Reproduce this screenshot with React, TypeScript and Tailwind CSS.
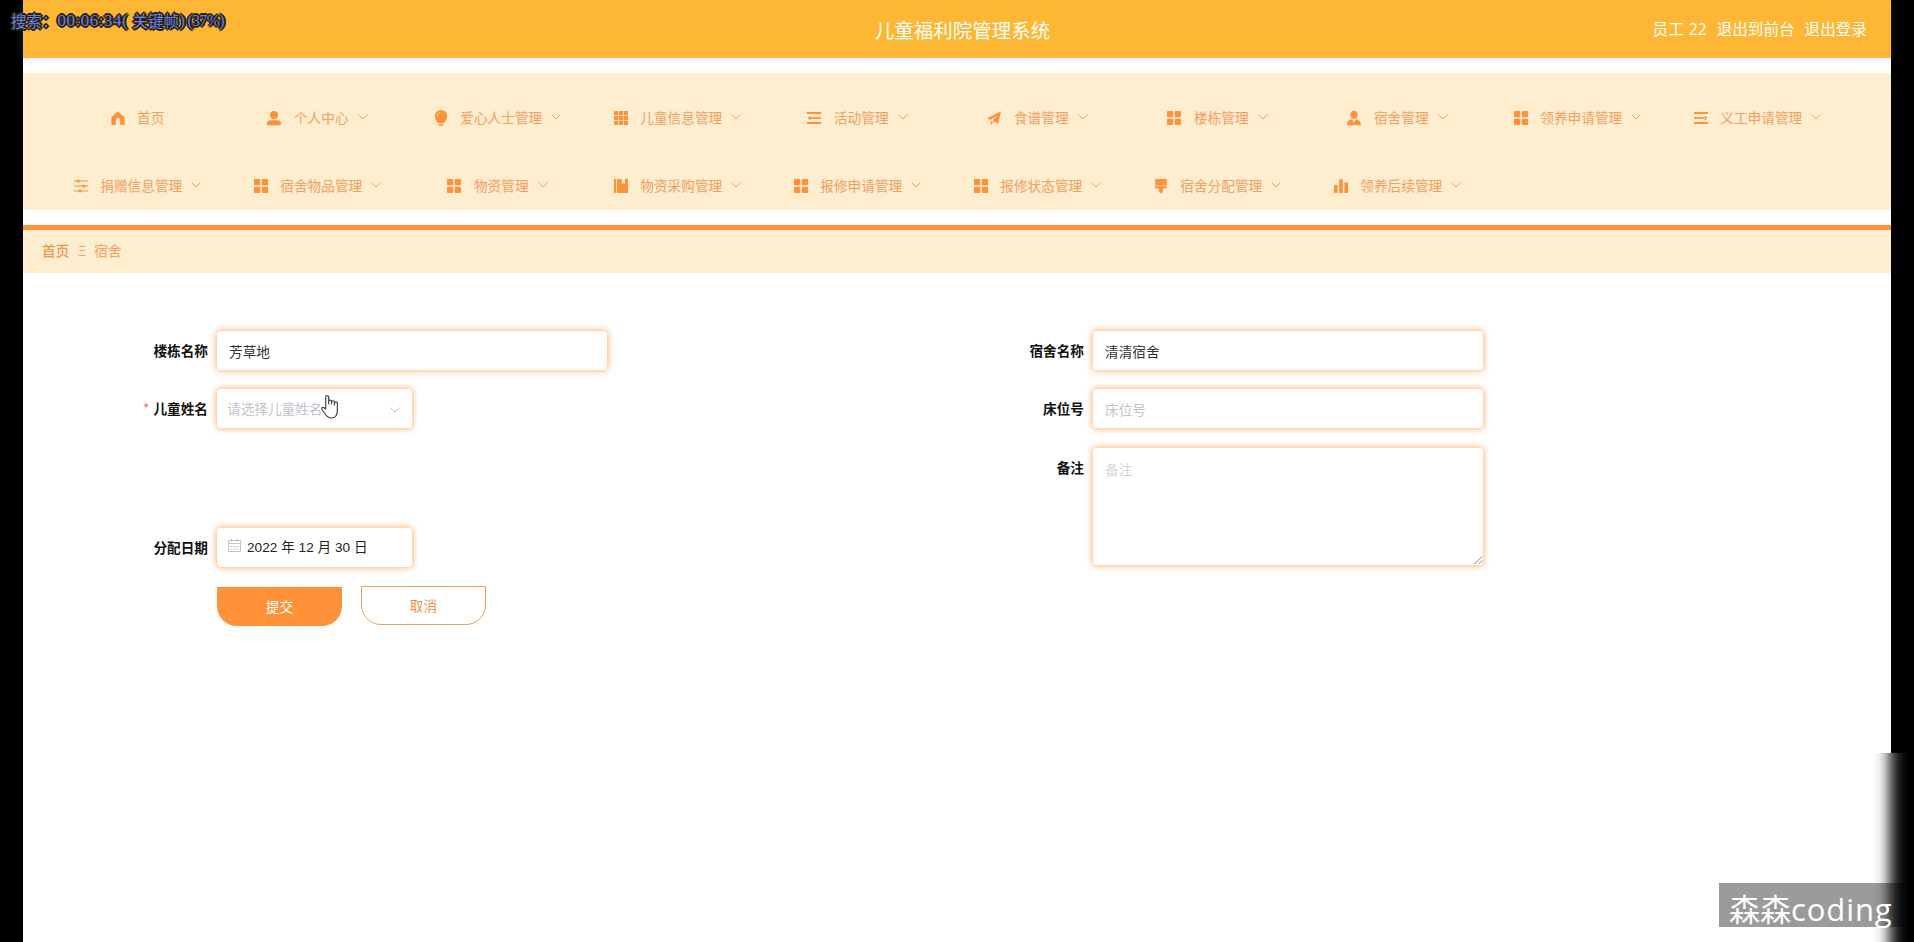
import React from "react";

type IconName =
  | "home" | "user" | "bulb" | "grid9" | "fold" | "plane" | "grid4" | "userSolid"
  | "unfold" | "sliders" | "book" | "brush" | "chart";

const shapes: Record<IconName, React.ReactNode> = {
  home: <path d="M0.4 6.3 7 0.5l6.6 5.8V14H9.2V9.2a2.2 2.2 0 0 0-4.4 0V14H0.4z" />,
  user: (
    <>
      <circle cx="7" cy="4" r="4" />
      <path d="M0 12.4C0 10.2 1.4 9.2 3.4 9.2h7.2c2 0 3.4 1 3.4 3.2 0 1.2-.4 1.9-1.4 1.9H1.4C.4 14.3 0 13.6 0 12.4z" />
    </>
  ),
  bulb: (
    <>
      <path d="M7-1A6.200 6.200 0 0 1 13.200 5.200c0 3.400-2 5-3.200 7H4C2.800 10.200.8 8.600.8 5.200A6.200 6.200 0 0 1 7-1zM4.900 13h4.200v1.700H4.900z" />
      <path d="M3.300 5.400C3.400 3.200 4.600 2 6.300 1.500" fill="none" stroke="#ffedcf" strokeWidth="0.900" />
    </>
  ),
  grid9: (
    <path d="M0 0h4.200v4.200H0zM4.900 0h4.200v4.200H4.900zM9.800 0H14v4.200H9.800zM0 4.900h4.200v4.200H0zM4.900 4.900h4.200v4.200H4.900zM9.800 4.900H14v4.200H9.800zM0 9.800h4.200V14H0zM4.900 9.800h4.200V14H4.900zM9.800 9.800H14V14H9.800z" />
  ),
  fold: <path d="M0 1h14v2H0zM4.500 6.200H14v1.700H4.500zM0 11h14v2H0zM0.600 7 3.600 4.700v4.600zM3 6.200h2v1.700H3z" />,
  unfold: <path d="M0 1h14v2H0zM0 6.200h11v1.700H0zM0 11h14v2H0zM13.600 7l-3.200-2.400v4.800z" />,
  plane: <path d="M14 0.300 0 7.200l3.700 1.700L10.400 4 5.400 9.700l5.800 2.700zM3.900 9.900V14.500l2.300-3.300z" />,
  grid4: (
    <>
      <rect x="0" y="0" width="6.200" height="6.200" rx="0.800" />
      <rect x="7.800" y="0" width="6.200" height="6.200" rx="0.800" />
      <rect x="0" y="7.800" width="6.200" height="6.200" rx="0.800" />
      <rect x="7.800" y="7.800" width="6.200" height="6.200" rx="0.800" />
    </>
  ),
  userSolid: (
    <>
      <ellipse cx="7" cy="3.700" rx="3.600" ry="4" />
      <path d="M0 14.300c0-3.600 1.600-5.500 4.600-6.100L7 11.200l2.400-3c3 .6 4.600 2.500 4.600 6.100z" />
    </>
  ),
  sliders: (
    <>
      <path d="M0 1.500h14v1.100H0zM0 6.500h14v1.100H0zM0 11.500h14v1.100H0z" />
      <circle cx="4.200" cy="2" r="1.600" />
      <circle cx="9.800" cy="7" r="1.600" />
      <circle cx="6" cy="12" r="1.600" />
    </>
  ),
  book: <path d="M0 0h2v14H0zM2.900 0h4.900v5.400l1.600-1.300L11 5.400V0h3v14H2.900z" />,
  brush: <path d="M1.200 0h11.600v6.400H1.200zM1.200 7.200h11.600v2.200H8.900v3L7 14.700l-1.900-2.300v-3H1.200z" />,
  chart: <path d="M0 6h3.600v8H0zM5.200 0.200h3.600V14H5.200zM10.400 3.500H14V14h-3.600z" />,
};

const menu: { icon: IconName; label: string; leaf?: boolean }[] = [
  { icon: "home", label: "首页", leaf: true },
  { icon: "user", label: "个人中心" },
  { icon: "bulb", label: "爱心人士管理" },
  { icon: "grid9", label: "儿童信息管理" },
  { icon: "fold", label: "活动管理" },
  { icon: "plane", label: "食谱管理" },
  { icon: "grid4", label: "楼栋管理" },
  { icon: "userSolid", label: "宿舍管理" },
  { icon: "grid4", label: "领养申请管理" },
  { icon: "unfold", label: "义工申请管理" },
  { icon: "sliders", label: "捐赠信息管理" },
  { icon: "grid4", label: "宿舍物品管理" },
  { icon: "grid4", label: "物资管理" },
  { icon: "book", label: "物资采购管理" },
  { icon: "grid4", label: "报修申请管理" },
  { icon: "grid4", label: "报修状态管理" },
  { icon: "brush", label: "宿舍分配管理" },
  { icon: "chart", label: "领养后续管理" },
];

function Chevron({ className }: { className: string }) {
  return (
    <svg viewBox="0 0 10 6" className={className} fill="none" stroke="currentColor">
      <path d="M0.500 0.500 5 5l4.500-4.500" />
    </svg>
  );
}

function MenuItem({ icon, label, leaf }: { icon: IconName; label: string; leaf?: boolean }) {
  return (
    <li className="flex h-[46px] items-center justify-center text-[#f0a05f]">
      <svg viewBox="0 0 14 14" className="mr-[12.500px] h-[14px] w-[14px] shrink-0 overflow-visible fill-[#ff9138]">
        {shapes[icon]}
      </svg>
      <span className="mb-[2px] text-[13.650px] leading-5">{label}</span>
      {!leaf && <Chevron className="mb-[3px] ml-[9px] h-[6px] w-[10px]" />}
    </li>
  );
}

const box = "rounded-[4px] bg-white shadow-[0_0_6px_1px_rgba(255,145,56,0.7)]";

function Field({ label, required, children }: { label: string; required?: boolean; children: React.ReactNode }) {
  return (
    <div className="flex items-start">
      <div className="w-[78px] shrink-0 pr-[9px] text-right leading-[39px] font-bold whitespace-nowrap text-[#111]">
        {required && <span className="mr-1 font-normal text-[#f56c6c]">*</span>}
        {label}
      </div>
      {children}
    </div>
  );
}

export default function App() {
  return (
    <div className="relative h-[942px] w-[1914px] overflow-hidden bg-black px-[23px] font-['Noto_Sans_CJK_SC',sans-serif] text-[13.650px]">
      <div className="flex h-full flex-col bg-white">
        <header className="grid h-[58px] shrink-0 grid-cols-3 items-center bg-[#feb734] pt-[1px] pr-[24px] text-white shadow-[0_1px_6px_rgba(64,158,255,0.300)]">
          <h1 className="col-start-2 pl-[35px] text-center text-[19.500px]">儿童福利院管理系统</h1>
          <div className="flex justify-end gap-[10px] font-['Open_Sans','Noto_Sans_CJK_SC',sans-serif] text-[15.600px]">
            <span className="[word-spacing:1px]">员工 22</span>
            <span>退出到前台</span>
            <span>退出登录</span>
          </div>
        </header>

        <nav className="mt-[15px] h-[137px] shrink-0 bg-[#ffedcf] pt-[22px] pl-[24.500px]">
          <ul className="grid w-[1800px] grid-cols-10 gap-y-[22px]">
            {menu.map((m) => (
              <MenuItem key={m.label} {...m} />
            ))}
          </ul>
        </nav>

        <div className="mt-[15px] flex h-[48px] shrink-0 items-center gap-[9px] border-t-[5px] border-[#ff9138] bg-[#ffedcf] pb-[3px] pl-[19px] text-[#f0a05f]">
          <span className="font-medium text-[#f29347]">首页</span>
          <span className="w-[7px] text-center">Ξ</span>
          <span>宿舍</span>
        </div>

        <main className="flex pt-[58px] pl-[116px]">
          <div className="flex w-[876px] shrink-0 flex-col">
            <Field label="楼栋名称">
              <div className={`${box} h-[39px] w-[390px] pl-[12px] leading-[40px] text-[#333]`}>芳草地</div>
            </Field>
            <div className="mt-[19px]">
              <Field label="儿童姓名" required>
                <div className={`${box} flex h-[39px] w-[195px] items-center justify-between pr-[12px] pl-[10px] text-[#c0c4cc]`}>
                  <span>请选择儿童姓名</span>
                  <Chevron className="mt-[2px] h-[6px] w-[10px]" />
                </div>
              </Field>
            </div>
            <div className="mt-[100px]">
              <Field label="分配日期">
                <div className={`${box} flex h-[39px] w-[195px] items-center pl-[11px] text-[#222]`}>
                  <svg viewBox="0 0 13 13" className="mr-[6px] mb-[4px] h-[13px] w-[13px]" fill="none" stroke="#c0c4cc">
                    <path d="M.5 1.500h12v11H.5zM.5 4.500h12M3.500 0v2.500M9.500 0v2.500" />
                    <path d="M2.500 7.500h8M2.500 10h8" strokeDasharray="2 1" />
                  </svg>
                  <span className="mt-[2px] font-['Liberation_Sans','Noto_Sans_CJK_SC',sans-serif]">2022 年 12 月 30 日</span>
                </div>
              </Field>
            </div>
            <div className="mt-[19px] flex gap-[19px] pl-[78px]">
              <button className="mt-px h-[39px] w-[125px] rounded-b-[20px] bg-[#ff9138] pb-px text-white">提交</button>
              <button className="h-[39px] w-[125px] rounded-b-[20px] border border-[#eda05f] text-[#ee9048]">取消</button>
            </div>
          </div>

          <div className="flex flex-col gap-[19px]">
            <Field label="宿舍名称">
              <div className={`${box} h-[39px] w-[390px] pl-[12px] leading-[40px] text-[#333]`}>清清宿舍</div>
            </Field>
            <Field label="床位号">
              <div className={`${box} h-[39px] w-[390px] pl-[12px] leading-[40px] text-[#c0c4cc]`}>床位号</div>
            </Field>
            <div className="pt-px">
              <Field label="备注">
                <div className={`${box} flex h-[117px] w-[390px] items-end justify-between pl-[12px]`}>
                  <span className="self-start pt-px leading-[41px] font-light text-[#c0c4cc]">备注</span>
                  <svg viewBox="0 0 10 10" className="h-[10px] w-[10px]" stroke="#888">
                    <path d="M1.500 9 9 1.500M5.500 9 9 5.500" />
                  </svg>
                </div>
              </Field>
            </div>
          </div>
        </main>
      </div>

      {/* hand pointer */}
      <svg viewBox="0 0 18 24" className="absolute top-[395px] left-[321px] h-[24px] w-[18px]" fill="white" stroke="#444" strokeWidth="1.200" strokeLinejoin="round">
        <path d="M4.700 14V2.200a1.500 1.500 0 0 1 3 0V9V6.500a1.400 1.400 0 0 1 2.900 0V9V7.200a1.400 1.400 0 0 1 2.900 0V10V8.400a1.400 1.400 0 0 1 2.900 0V15c0 4-1.500 8-6 8-4 0-5.400-2.500-7.400-5.500L.9 14.200c-.6-1.500 1-2.400 2.200-1.500z" />
      </svg>

      {/* player seek readout */}
      <div className="absolute top-[10px] left-[11px] flex h-[22px] items-center text-[15.500px] whitespace-pre text-[#6680ea] [text-shadow:1px_0_#2c2010,-1px_0_#2c2010,0_1px_#2c2010,0_-1px_#2c2010,1px_1px_#2c2010,-1px_-1px_#2c2010,1px_-1px_#2c2010,-1px_1px_#2c2010,2px_0_#2c2010,-2px_0_#2c2010,0_2px_#2c2010,0_-2px_#2c2010]">
        <span className="w-[46.500px]">搜索：</span>
        <span className="w-[75px] font-['Liberation_Serif',serif] text-[17px] tracking-[0.500px]">00:06:34(</span>
        <span className="w-[47px]">关键帧</span>
        <span className="font-['Liberation_Serif',serif] text-[16px] tracking-[-0.700px]">) (37%)</span>
      </div>

      {/* channel watermark */}
      <div className="absolute top-[753px] left-[1891px] h-[189px] w-[23px] bg-white" />
      <div className="absolute top-[883px] left-[1719px] h-[44px] w-[185px] bg-[#9b9b9b]" />
      <div className="absolute top-[753px] left-[1873px] h-[189px] w-[41px] bg-[linear-gradient(to_right,rgba(0,0,0,0),rgba(0,0,0,0.06)_15%,rgba(0,0,0,0.22)_28%,rgba(0,0,0,0.5)_41%,rgba(0,0,0,0.72)_52%,rgba(0,0,0,0.87)_63%,rgba(0,0,0,0.96)_75%,#000_88%)]" />
      <div className="absolute top-[882px] left-[1729px] flex h-[44px] font-['Open_Sans','Noto_Sans_CJK_SC',sans-serif] text-[31px] leading-[54px] whitespace-nowrap text-white">
        <span>森森</span>
        <span className="tracking-[0.900px]">coding</span>
      </div>
    </div>
  );
}
